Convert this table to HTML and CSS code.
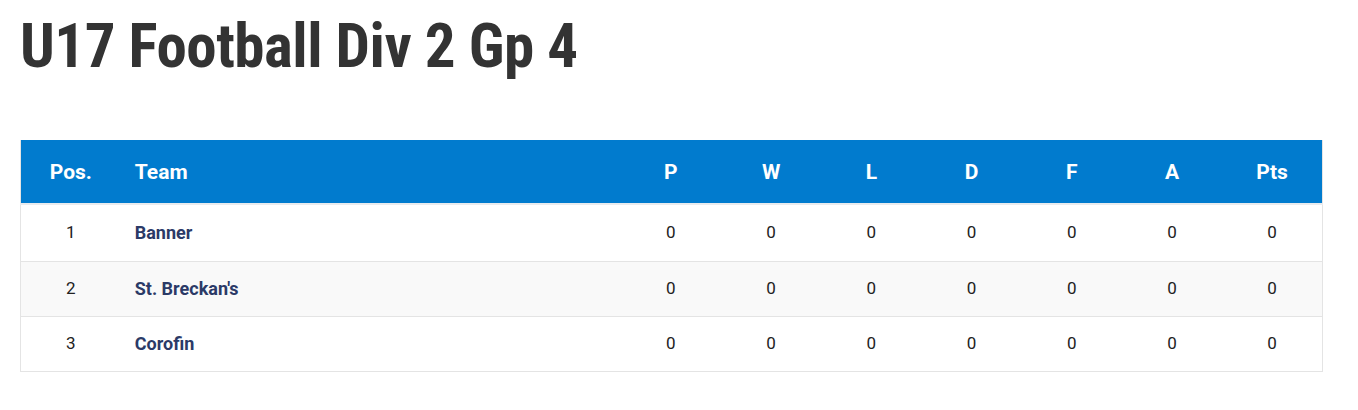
FILE: index.html
```html
<!DOCTYPE html>
<html lang="en">
<head>
  <meta charset="UTF-8" />
  <title>U17 Football Div 2 Gp 4</title>
  <link rel="stylesheet" href="styles.css">
</head>
<body>
  <div class="page">
    <h1 class="league-title">U17 Football Div 2 Gp 4</h1>

    <table class="league-table">
      <colgroup>
        <col class="col-narrow">
        <col>
        <col class="col-narrow"><col class="col-narrow"><col class="col-narrow"><col class="col-narrow">
        <col class="col-narrow"><col class="col-narrow"><col class="col-narrow">
      </colgroup>
      <thead>
        <tr>
          <th>Pos.</th>
          <th class="col-team">Team</th>
          <th>P</th>
          <th>W</th>
          <th>L</th>
          <th>D</th>
          <th>F</th>
          <th>A</th>
          <th>Pts</th>
        </tr>
      </thead>
      <tbody>
        <tr>
          <td>1</td>
          <td class="col-team">Banner</td>
          <td>0</td><td>0</td><td>0</td><td>0</td><td>0</td><td>0</td><td>0</td>
        </tr>
        <tr>
          <td>2</td>
          <td class="col-team">St. Breckan's</td>
          <td>0</td><td>0</td><td>0</td><td>0</td><td>0</td><td>0</td><td>0</td>
        </tr>
        <tr>
          <td>3</td>
          <td class="col-team">Corofin</td>
          <td>0</td><td>0</td><td>0</td><td>0</td><td>0</td><td>0</td><td>0</td>
        </tr>
      </tbody>
    </table>
  </div>
</body>
</html>
```

FILE: styles.css
```css
:root {
  --blue: #017bce;
  --navy: #2b3a67;
  --text: #222;
  --line: #e4e4e4;
}

body {
  margin: 0;
  font-family: Roboto, 'Noto Sans', sans-serif;
  color: var(--text);
  background: #fff;
}

.page {
  padding: 0 35px 0 20px;
}

.league-title {
  margin: 0;
  padding-top: 12px;
  height: 128px;
  font-family: 'Roboto Condensed', Roboto, sans-serif;
  font-stretch: condensed;
  font-size: 61px;
  font-weight: 700;
  line-height: 68px;
  color: #333;
  letter-spacing: -0.5px;
}

.league-table {
  width: 100%;
  border-collapse: collapse;
  table-layout: fixed;
  border: 1px solid var(--line);
  border-top: none;
}

.league-table .col-narrow {
  width: 7.7%;
}

.league-table th,
.league-table td {
  text-align: center;
  padding: 0;
}

.league-table .col-team {
  text-align: left;
  padding-left: 14px;
}

.league-table thead th {
  background: var(--blue);
  color: #fff;
  font-size: 21px;
  font-weight: 700;
  height: 63px;
}

.league-table tbody td {
  font-size: 17px;
  height: 52px;
  padding-bottom: 2px;
  border-top: 1px solid var(--line);
}

.league-table tbody tr:first-child td {
  height: 54px;
  border-top: 2px solid #e9ebee;
}

.league-table tbody tr:nth-child(even) {
  background: #f9f9f9;
}

.league-table td.col-team {
  color: var(--navy);
  font-size: 18px;
  font-weight: 700;
}
```
